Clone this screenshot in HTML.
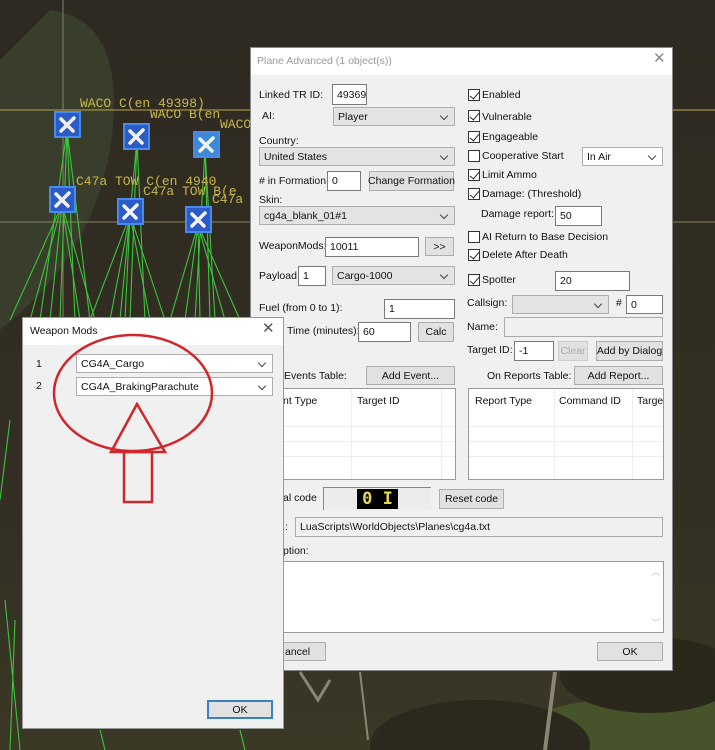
<!DOCTYPE html>
<html><head><meta charset="utf-8"><style>
*{margin:0;padding:0;box-sizing:border-box}
html,body{width:715px;height:750px;overflow:hidden}
body{position:relative;font-family:"Liberation Sans",sans-serif;font-size:10.5px;color:#111;background:#2f2b22}
.a{position:absolute}
.t{position:absolute;white-space:nowrap;line-height:13px}
.in{position:absolute;background:#fff;border:1px solid #7a7a7a;padding:0 4px;white-space:nowrap;display:flex;align-items:center;overflow:hidden}
.sel{position:absolute;background:#e3e3e3;border:1px solid #adadad;padding:0 4px;white-space:nowrap;display:flex;align-items:center}
.sel:after{content:"";position:absolute;right:7px;top:5px;width:5px;height:5px;border-right:1px solid #444;border-bottom:1px solid #444;transform:rotate(45deg)}
.w{background:#fff}
.btn{position:absolute;background:#e1e1e1;border:1px solid #adadad;white-space:nowrap;display:flex;align-items:center;justify-content:center}
.cb{position:absolute;width:12px;height:12px;border:1px solid #333;background:#fff}
.cb.k:after{content:"";position:absolute;left:3px;top:0px;width:4px;height:8px;border-right:1.5px solid #222;border-bottom:1.5px solid #222;transform:rotate(40deg)}
</style></head><body>
<svg class="a" style="left:0;top:0" width="715" height="750">
<defs><linearGradient id="bg" x1="0" y1="0" x2="0" y2="1"><stop offset="0" stop-color="#2e2a21"/><stop offset="0.7" stop-color="#332f23"/><stop offset="1" stop-color="#3c3826"/></linearGradient></defs>
<rect width="715" height="750" fill="url(#bg)"/>
<path d="M50 10 Q130 20 110 150 Q90 260 0 330 L0 60 Z" fill="#3a402c" opacity="0.9"/>
<path d="M470 750 Q540 700 610 700 Q650 660 715 650 L715 750 Z" fill="#46532b"/>
<ellipse cx="480" cy="745" rx="110" ry="45" fill="#2b281d"/>
<ellipse cx="650" cy="675" rx="90" ry="38" fill="#2a271b"/>
<path d="M555 672 L545 750" stroke="#8a8670" stroke-width="4"/>
<path d="M300 672 L318 700 L330 680" stroke="#8a8670" stroke-width="3" fill="none"/>
<path d="M360 672 L368 740" stroke="#8a8670" stroke-width="2"/>
<line x1="0" y1="110" x2="715" y2="110" stroke="#b8a64a" stroke-width="1"/>
<line x1="0" y1="222" x2="715" y2="222" stroke="#8a8060" stroke-width="1"/>
<line x1="63" y1="0" x2="63" y2="320" stroke="#8a8060" stroke-width="1"/>
<g stroke="#3cc43c" stroke-width="1.1" fill="none">
<path d="M67 130 L40 320 M67 130 L60 320 M67 130 L75 320 M67 130 L90 320"/>
<path d="M137 140 L120 320 M137 140 L130 320 M137 140 L145 320"/>
<path d="M205 150 L195 320 M205 150 L210 320 M205 150 L215 320"/>
<path d="M62 205 L10 320 M62 205 L30 320 M62 205 L50 320 M62 205 L80 320 M62 205 L95 320"/>
<path d="M130 215 L90 320 M130 215 L110 320 M130 215 L125 320 M130 215 L150 320 M130 215 L165 320"/>
<path d="M198 225 L170 320 M198 225 L185 320 M198 225 L200 320 M198 225 L225 320 M198 225 L240 320"/>
<path d="M10 420 L0 500 M5 600 L20 750 M15 620 L10 750 M240 730 L245 750 M100 730 L105 750"/>
</g>
<g fill="#2a5bc8" stroke="#4a8ae8" stroke-width="2">
<rect x="55" y="112" width="25" height="25"/><rect x="124" y="124" width="25" height="25"/><rect x="194" y="132" width="25" height="25" fill="#3a8ad8"/>
<rect x="50" y="187" width="25" height="25"/><rect x="118" y="199" width="25" height="25"/><rect x="186" y="207" width="25" height="25"/>
</g>
<g stroke="#f2f2f2" stroke-width="3.5" stroke-linecap="round">
<path d="M61 131 L74 118 M61 119 L73 131"/><path d="M130 143 L143 130 M130 131 L142 143"/><path d="M200 151 L213 138 M200 139 L212 151"/>
<path d="M56 206 L69 193 M56 194 L68 206"/><path d="M124 218 L137 205 M124 206 L136 218"/><path d="M192 226 L205 213 M192 214 L204 226"/>
</g>
<g fill="#c8b84a" font-family="Liberation Mono" font-size="13">
<text x="80" y="107">WACO C(en 49398)</text><text x="150" y="118">WACO B(en</text><text x="220" y="128">WACO</text>
<text x="76" y="185">C47a TOW C(en 4940</text><text x="143" y="195">C47a TOW B(e</text><text x="212" y="203">C47a</text>
</g>
</svg>

<div class="a" style="left:250px;top:47px;width:423px;height:624px;background:#f0f0f0;border:1px solid #888"></div>
<div class="a" style="left:251px;top:48px;width:421px;height:27px;background:#fff"></div>
<div class="t" style="left:257px;top:55px;color:#999">Plane Advanced (1 object(s))</div>
<div class="t" style="left:653px;top:52px;font-size:15px;color:#888">✕</div>

<div class="t" style="left:259px;top:89px">Linked TR ID:</div>
<div class="in" style="left:332px;top:84px;width:35px;height:21px">49369</div>
<div class="t" style="left:262px;top:110px">AI:</div>
<div class="sel" style="left:333px;top:107px;width:122px;height:19px">Player</div>
<div class="t" style="left:259px;top:135px">Country:</div>
<div class="sel" style="left:259px;top:147px;width:196px;height:19px">United States</div>
<div class="t" style="left:259px;top:175px"># in Formation:</div>
<div class="in" style="left:327px;top:171px;width:34px;height:20px">0</div>
<div class="btn" style="left:369px;top:171px;width:85px;height:20px">Change Formation</div>
<div class="t" style="left:259px;top:194px">Skin:</div>
<div class="sel" style="left:259px;top:206px;width:196px;height:19px">cg4a_blank_01#1</div>
<div class="t" style="left:259px;top:240px">WeaponMods:</div>
<div class="in" style="left:325px;top:237px;width:94px;height:20px">10011</div>
<div class="btn" style="left:425px;top:237px;width:29px;height:19px">&gt;&gt;</div>
<div class="t" style="left:259px;top:270px">Payload:</div>
<div class="in" style="left:298px;top:266px;width:28px;height:20px">1</div>
<div class="sel" style="left:332px;top:266px;width:123px;height:19px">Cargo-1000</div>
<div class="t" style="left:259px;top:302px">Fuel (from 0 to 1):</div>
<div class="in" style="left:384px;top:299px;width:71px;height:20px">1</div>
<div class="t" style="left:287px;top:325px">Time (minutes):</div>
<div class="in" style="left:358px;top:322px;width:53px;height:20px">60</div>
<div class="btn" style="left:418px;top:322px;width:36px;height:20px">Calc</div>

<div class="cb k" style="left:468px;top:89px"></div><div class="t" style="left:482px;top:89px">Enabled</div>
<div class="cb k" style="left:468px;top:110px"></div><div class="t" style="left:482px;top:111px">Vulnerable</div>
<div class="cb k" style="left:468px;top:131px"></div><div class="t" style="left:482px;top:131px">Engageable</div>
<div class="cb" style="left:468px;top:150px"></div><div class="t" style="left:482px;top:150px">Cooperative Start</div>
<div class="sel w" style="left:582px;top:147px;width:81px;height:19px">In Air</div>
<div class="cb k" style="left:468px;top:169px"></div><div class="t" style="left:482px;top:169px">Limit Ammo</div>
<div class="cb k" style="left:468px;top:188px"></div><div class="t" style="left:482px;top:188px">Damage: (Threshold)</div>
<div class="t" style="left:481px;top:208px">Damage report:</div>
<div class="in" style="left:555px;top:206px;width:47px;height:20px">50</div>
<div class="cb" style="left:468px;top:231px"></div><div class="t" style="left:482px;top:231px">AI Return to Base Decision</div>
<div class="cb k" style="left:468px;top:249px"></div><div class="t" style="left:482px;top:249px">Delete After Death</div>
<div class="cb k" style="left:468px;top:274px"></div><div class="t" style="left:482px;top:274px">Spotter</div>
<div class="in" style="left:555px;top:271px;width:75px;height:20px">20</div>
<div class="t" style="left:467px;top:297px">Callsign:</div>
<div class="sel" style="left:512px;top:295px;width:97px;height:19px"></div>
<div class="t" style="left:616px;top:297px">#</div>
<div class="in" style="left:626px;top:295px;width:37px;height:19px">0</div>
<div class="t" style="left:467px;top:321px">Name:</div>
<div class="in" style="left:504px;top:317px;width:159px;height:20px;background:#f0f0f0;border-color:#aaa"></div>
<div class="t" style="left:467px;top:344px">Target ID:</div>
<div class="in" style="left:514px;top:341px;width:40px;height:20px">-1</div>
<div class="btn" style="left:558px;top:341px;width:30px;height:20px;color:#aaa;border-color:#ccc">Clear</div>
<div class="btn" style="left:596px;top:341px;width:67px;height:20px">Add by Dialog</div>

<div class="t" style="left:284px;top:370px">Events Table:</div>
<div class="btn" style="left:366px;top:366px;width:89px;height:19px">Add Event...</div>
<div class="t" style="left:487px;top:370px">On Reports Table:</div>
<div class="btn" style="left:574px;top:366px;width:89px;height:19px">Add Report...</div>

<div class="a" style="left:280px;top:388px;width:176px;height:92px;background:#fff;border:1px solid #999"></div>
<div class="a" style="left:351px;top:389px;width:1px;height:90px;background:#eee"></div>
<div class="a" style="left:441px;top:389px;width:1px;height:90px;background:#eee"></div>
<div class="t" style="left:283px;top:395px">nt Type</div><div class="t" style="left:357px;top:395px">Target ID</div>
<div class="a" style="left:468px;top:388px;width:196px;height:92px;background:#fff;border:1px solid #999"></div>
<div class="a" style="left:554px;top:389px;width:1px;height:90px;background:#eee"></div>
<div class="a" style="left:632px;top:389px;width:1px;height:90px;background:#eee"></div>
<div class="t" style="left:475px;top:395px">Report Type</div><div class="t" style="left:559px;top:395px">Command ID</div><div class="t" style="left:637px;top:395px">Targe</div>
<div class="a" style="left:281px;top:426px;width:174px;height:1px;background:#eee"></div>
<div class="a" style="left:281px;top:441px;width:174px;height:1px;background:#eee"></div>
<div class="a" style="left:281px;top:456px;width:174px;height:1px;background:#eee"></div>
<div class="a" style="left:469px;top:426px;width:194px;height:1px;background:#eee"></div>
<div class="a" style="left:469px;top:441px;width:194px;height:1px;background:#eee"></div>
<div class="a" style="left:469px;top:456px;width:194px;height:1px;background:#eee"></div>

<div class="t" style="left:283px;top:492px">al code</div>
<div class="a" style="left:323px;top:487px;width:108px;height:23px;border-top:1px solid #888;border-left:1px solid #888;background:#ececec"></div>
<div class="a" style="left:357px;top:489px;width:41px;height:20px;background:#000;color:#e8d84a;font-family:'DejaVu Sans Mono',monospace;font-size:17px;line-height:20px;text-align:center;font-weight:bold">0 I</div>
<div class="btn" style="left:439px;top:489px;width:65px;height:20px">Reset code</div>
<div class="t" style="left:285px;top:521px">:</div>
<div class="in" style="left:295px;top:517px;width:368px;height:20px;background:#f0f0f0;border-color:#aaa">LuaScripts\WorldObjects\Planes\cg4a.txt</div>
<div class="t" style="left:283px;top:545px">ption:</div>
<div class="a" style="left:280px;top:561px;width:384px;height:72px;background:#fff;border:1px solid #999"></div>
<div class="t" style="left:651px;top:566px;color:#bbb;font-size:9px">︿</div>
<div class="t" style="left:651px;top:617px;color:#bbb;font-size:9px">﹀</div>
<div class="btn" style="left:270px;top:642px;width:56px;height:19px;justify-content:flex-start;padding-left:14px">ancel</div>
<div class="btn" style="left:597px;top:642px;width:66px;height:19px">OK</div>

<div class="a" style="left:22px;top:317px;width:262px;height:412px;background:#f0f0f0;border:1px solid #999"></div>
<div class="a" style="left:23px;top:318px;width:260px;height:27px;background:#fff"></div>
<div class="t" style="left:30px;top:325px">Weapon Mods</div>
<div class="t" style="left:262px;top:322px;font-size:15px;color:#555">✕</div>
<div class="t" style="left:36px;top:358px">1</div>
<div class="sel w" style="left:76px;top:354px;width:197px;height:19px">CG4A_Cargo</div>
<div class="t" style="left:36px;top:380px">2</div>
<div class="sel w" style="left:76px;top:377px;width:197px;height:19px">CG4A_BrakingParachute</div>
<div class="btn" style="left:207px;top:700px;width:66px;height:19px;border:2px solid #3c7fc8">OK</div>

<svg class="a" style="left:0;top:0" width="715" height="750">
<g fill="none" stroke="#d0262c" stroke-width="2.5">
<ellipse cx="133" cy="393" rx="79" ry="58"/>
<path d="M137 404 L111 452 L165 452 Z"/>
<rect x="124" y="452" width="28" height="50"/>
</g>
</svg>
</body></html>
